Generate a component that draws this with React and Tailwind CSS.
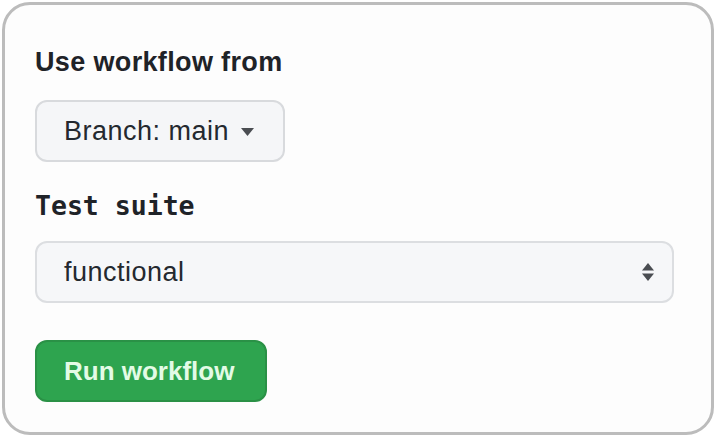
import React from "react";

const sans = { fontFamily: '"Liberation Sans", Arial, sans-serif' };
const mono = { fontFamily: '"DejaVu Sans Mono", Menlo, monospace' };

export default function App() {
  return (
    <div className="w-[716px] h-[437px] bg-white p-[2px]">
      <div
        className="w-[712px] h-[433px] rounded-[28px] border-[3px] border-[#bcbcbc] bg-[#fdfdfd] pl-[30px] pt-[41px] flex flex-col items-start"
        style={sans}
      >
        <div className="text-[27px] leading-[32px] font-bold text-[#1f2328] tracking-[0.35px]">
          Use workflow from
        </div>

        <button className="mt-[22px] h-[62px] w-[250px] rounded-[12px] border-2 border-[#d8dadd] bg-[#f5f6f8] pl-[27px] flex items-center gap-[12px] text-[27px] text-[#24292f] tracking-[0.5px]">
          <span>Branch: main</span>
          <svg width="13" height="8" viewBox="0 0 13 8" className="mt-[2px]">
            <path d="M0 0 H13 L6.5 8 Z" fill="#4a4d52" />
          </svg>
        </button>

        <div
          className="mt-[28px] text-[26.5px] leading-[32px] font-bold text-[#1f2328]"
          style={mono}
        >
          Test suite
        </div>

        <div className="mt-[19px] h-[62px] w-[639px] rounded-[12px] border-2 border-[#dcdee1] bg-[#f6f7f9] pl-[27px] pr-[17px] flex items-center justify-between text-[27px] text-[#24292f] tracking-[0.5px]">
          <span>functional</span>
          <svg width="14" height="20" viewBox="0 0 14 20">
            <path d="M7 1 L13 8.5 H1 Z" fill="#4a4d52" />
            <path d="M1 11.5 H13 L7 19 Z" fill="#4a4d52" />
          </svg>
        </div>

        <button className="mt-[37px] h-[62px] w-[232px] rounded-[12px] border-2 border-[#2a9146] bg-[#2ea44f] pl-[27px] flex items-center text-[26px] font-bold text-[#e3fbe6]">
          Run workflow
        </button>
      </div>
    </div>
  );
}
